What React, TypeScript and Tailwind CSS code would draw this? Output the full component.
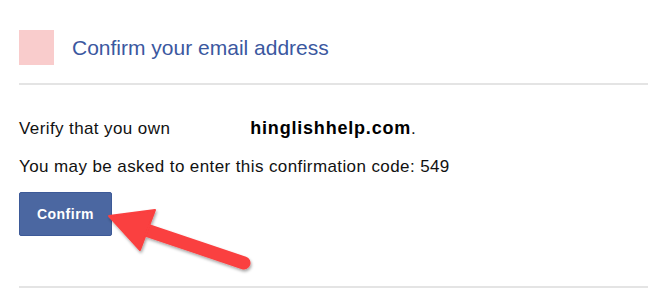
import React from "react";

const Arrow = () => (
  <svg
    className="pointer-events-none absolute left-0 top-0"
    width="648"
    height="298"
    viewBox="0 0 648 298"
  >
    <defs>
      <filter id="arrowShadow" x="-20%" y="-20%" width="140%" height="160%">
        <feDropShadow dx="1" dy="2" stdDeviation="1.5" floodColor="#000" floodOpacity="0.35" />
      </filter>
    </defs>
    <g filter="url(#arrowShadow)">
      <line x1="146" y1="230" x2="244" y2="263" stroke="#fa3f3f" strokeWidth="13" strokeLinecap="round" />
      <polygon
        points="109,216 155,210 140,250"
        fill="#fa3f3f"
        stroke="#fa3f3f"
        strokeWidth="2"
        strokeLinejoin="round"
      />
    </g>
  </svg>
);

export default function App() {
  return (
    <div className="relative h-[298px] w-[648px] overflow-hidden bg-white pl-[19px] font-['Liberation_Sans',Arial,sans-serif]">
      {/* header */}
      <div className="flex items-center gap-[18px] pt-[30px]">
        <div className="h-[35px] w-[35px] bg-[#f9cccc]" />
        <h1 className="text-[21px] leading-[35px] text-[#3b589f]">Confirm your email address</h1>
      </div>
      <div className="mt-[18px] h-[2px] bg-[#e4e4e4]" />

      {/* body */}
      <div className="pt-[33px] text-[17px] leading-[20px] tracking-[0.4px] text-[#111]">
        <p className="flex items-baseline">
          <span>Verify that you own</span>
          <span className="inline-block w-[80px]" />
          <b className="text-[18px] tracking-[0.8px] text-black">hinglishhelp.com</b>
          <span>.</span>
        </p>
        <p className="mt-[18px]">You may be asked to enter this confirmation code: 549</p>
      </div>

      <button className="mt-[15px] flex h-[44px] w-[93px] items-center justify-center rounded-[2px] border border-[#3d5a98] bg-[#4b67a1] text-[14px] font-bold tracking-[0.5px] text-white">
        Confirm
      </button>

      <div className="mt-[50px] h-[2px] bg-[#e4e4e4]" />

      <Arrow />
    </div>
  );
}
